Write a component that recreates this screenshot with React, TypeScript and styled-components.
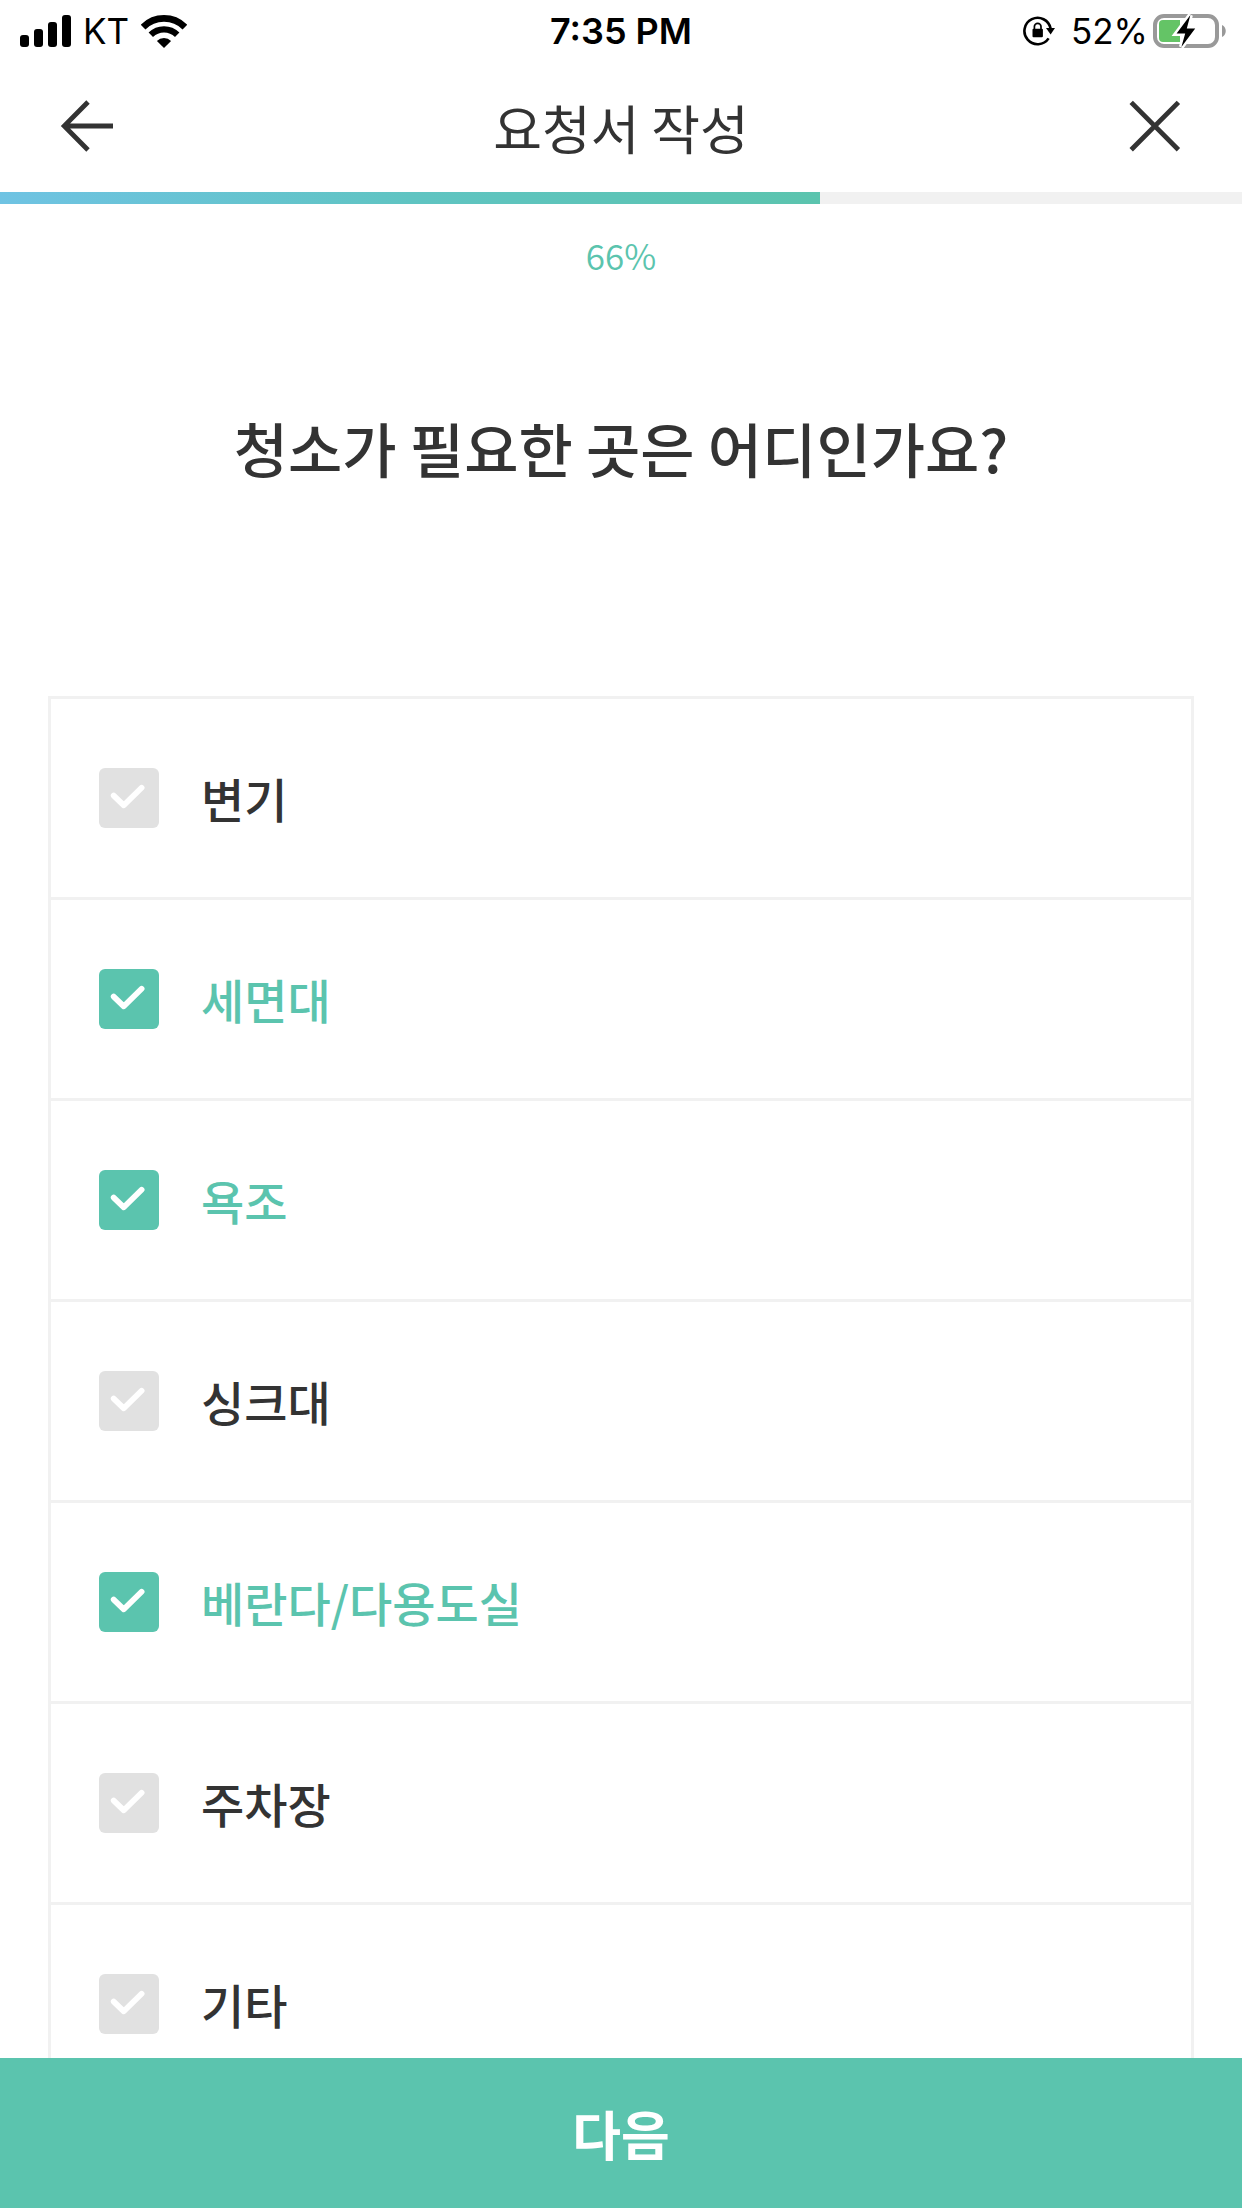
import React, { useState } from "react";
import styled, { createGlobalStyle } from "styled-components";

const teal = "#5bc4ae";
const ink = "#333333";
const line = "#f1f1f1";

const GlobalStyle = createGlobalStyle`
  *, *::before, *::after { box-sizing: border-box; }
  body {
    margin: 0;
    background: #ffffff;
    color: ${ink};
    font-family: "Noto Sans CJK KR", sans-serif;
  }
`;

const Screen = styled.div`
  display: flex;
  flex-direction: column;
  height: 100vh;
  overflow: hidden;
`;

const StatusBar = styled.div`
  display: grid;
  grid-template-columns: 1fr auto 1fr;
  align-items: center;
  flex: none;
  height: 62px;
  padding: 0 16px;
  color: #000000;
  font-family: Inter, "Liberation Sans", sans-serif;
  font-size: 35px;
  line-height: 44px;
`;

const StatusGroup = styled.div<{ $end?: boolean }>`
  display: flex;
  align-items: center;
  justify-content: ${(p) => (p.$end ? "flex-end" : "flex-start")};
  gap: ${(p) => (p.$end ? "16px" : "12px")};
  padding-left: 4px;

  svg { display: block; flex: none; }
`;

const Clock = styled.time`
  font-size: 36px;
  font-weight: 600;
`;

const Battery = styled.span`
  display: flex;
  align-items: center;
  gap: 5px;
`;

const Header = styled.header`
  display: grid;
  grid-template-columns: 1fr auto 1fr;
  align-items: center;
  flex: none;
  height: 130px;
  padding: 0 48px;
`;

const Title = styled.h1`
  margin: 0;
  font-size: 53px;
  font-weight: 400;
  line-height: 76px;
`;

const IconButton = styled.button<{ $end?: boolean }>`
  display: flex;
  justify-self: ${(p) => (p.$end ? "end" : "start")};
  padding: 12px;
  border: 0;
  background: none;
  color: ${ink};
  cursor: pointer;
`;

const Progress = styled.div`
  flex: none;
  height: 12px;
  background: ${line};
`;

const ProgressFill = styled.div`
  height: 100%;
  background: linear-gradient(90deg, #6fc3e3, #5fc4c2 50%, ${teal});
`;

const Content = styled.main`
  flex: 1;
  min-height: 0;
  overflow-y: auto;
  scrollbar-width: none;
  text-align: center;
`;

const Percent = styled.p`
  margin: 0;
  padding-top: 25px;
  color: ${teal};
  font-size: 35px;
  font-weight: 350;
  line-height: 52px;
`;

const Form = styled.fieldset`
  min-width: 0;
  margin: 0;
  padding: 0 48px 48px;
  border: 0;
`;

const Question = styled.legend`
  width: 100%;
  padding: 120px 0 201px;
  font-size: 59px;
  font-weight: 500;
  line-height: 94px;
`;

const Options = styled.ul`
  margin: 0;
  padding: 0;
  border: 3px solid ${line};
  list-style: none;
`;

const OptionItem = styled.li`
  & + & { border-top: 3px solid ${line}; }
`;

const OptionLabel = styled.label<{ $on: boolean }>`
  display: flex;
  align-items: center;
  gap: 42px;
  height: 198px;
  padding: 0 48px;
  color: ${(p) => (p.$on ? teal : ink)};
  font-size: 47px;
  font-weight: 500;
  line-height: 68px;
  cursor: pointer;
`;

const Tick = styled.span`
  display: grid;
  flex: none;

  > * { grid-area: 1 / 1; }
  svg { pointer-events: none; }
`;

const TickInput = styled.input`
  appearance: none;
  width: 60px;
  height: 60px;
  margin: 0;
  border-radius: 6px;
  background: #e1e1e1;
  cursor: pointer;

  &:checked { background: ${teal}; }
`;

const NextButton = styled.button`
  flex: none;
  height: 150px;
  border: 0;
  background: ${teal};
  color: #ffffff;
  font-family: inherit;
  font-size: 53px;
  font-weight: 700;
  line-height: 76px;
  cursor: pointer;
`;

const SignalIcon = () => (
  <svg width="51" height="32" viewBox="0 0 51 32" aria-hidden="true">
    <rect x="0" y="20" width="9" height="12" rx="3" />
    <rect x="14" y="14" width="9" height="18" rx="3" />
    <rect x="28" y="7" width="9" height="25" rx="3" />
    <rect x="42" y="0" width="9" height="32" rx="3" />
  </svg>
);

const WifiIcon = () => (
  <svg width="46" height="33" viewBox="0 0 46 33" aria-hidden="true">
    <path d="M2.1 12.1A29.5 29.5 0 0 1 43.9 12.1" fill="none" stroke="#000" strokeWidth="6.6" />
    <path d="M9.8 19.8A18.6 18.6 0 0 1 36.2 19.8" fill="none" stroke="#000" strokeWidth="6.2" />
    <path d="M23 33L15.9 25.9A10 10 0 0 1 30.1 25.9Z" />
  </svg>
);

const RotationLockIcon = () => (
  <svg width="32" height="30" viewBox="0 0 32 30" aria-hidden="true">
    <path d="M27.6 12.6A13.2 13.2 0 1 0 25.6 22.4" fill="none" stroke="#000" strokeWidth="2.6" />
    <path d="M23 12H32L27.6 18.6Z" />
    <rect x="9.5" y="12.8" width="10.4" height="8.4" rx="1" />
    <path d="M11.4 13.5V10.6a3.3 3.3 0 0 1 6.6 0V13.5" fill="none" stroke="#000" strokeWidth="1.7" />
  </svg>
);

const BatteryIcon = () => (
  <svg width="73" height="34" viewBox="0 0 73 34" aria-hidden="true">
    <rect x="2" y="2" width="62" height="30" rx="9" fill="none" stroke="#999" strokeWidth="4" />
    <path d="M10 6H27V28H10a4 4 0 0 1-4-4V10a4 4 0 0 1 4-4Z" fill="#64c466" />
    <path d="M69 11c5 2 5 10 0 12Z" fill="#999" />
    <path
      d="M37.4 1L23.6 19.4H32.2L28.4 33L42.2 14.4H33.8Z"
      stroke="#fff"
      strokeWidth="5"
      paintOrder="stroke"
    />
  </svg>
);

const BackIcon = () => (
  <svg width="53" height="54" viewBox="0 0 53 54" fill="none" stroke="currentColor" strokeWidth="4.8" aria-hidden="true">
    <path d="M28 2L4.2 26L28 50M4 26H53" />
  </svg>
);

const CloseIcon = () => (
  <svg width="54" height="54" viewBox="0 0 54 54" fill="none" stroke="currentColor" strokeWidth="4.8" aria-hidden="true">
    <path d="M3.2 2.4L50.4 49.8M50.4 2.4L3.2 49.8" />
  </svg>
);

const CheckIcon = () => (
  <svg width="60" height="60" viewBox="0 0 60 60" fill="none" stroke="#fff" strokeWidth="5.8" strokeLinecap="round" strokeLinejoin="round" aria-hidden="true">
    <path d="M14.7 27.6L24.8 37.3L42.6 19.8" />
  </svg>
);

const places = ["변기", "세면대", "욕조", "싱크대", "베란다/다용도실", "주차장", "기타"];
const progress = 66;

export default function App() {
  const [selected, setSelected] = useState<string[]>(["세면대", "욕조", "베란다/다용도실"]);

  const toggle = (place: string) =>
    setSelected((now) => (now.includes(place) ? now.filter((p) => p !== place) : [...now, place]));

  return (
    <Screen>
      <GlobalStyle />
      <StatusBar>
        <StatusGroup>
          <SignalIcon />
          <span>KT</span>
          <WifiIcon />
        </StatusGroup>
        <Clock>7:35 PM</Clock>
        <StatusGroup $end>
          <RotationLockIcon />
          <Battery>
            <span>52%</span>
            <BatteryIcon />
          </Battery>
        </StatusGroup>
      </StatusBar>
      <Header>
        <IconButton type="button" aria-label="뒤로">
          <BackIcon />
        </IconButton>
        <Title>요청서 작성</Title>
        <IconButton type="button" aria-label="닫기" $end>
          <CloseIcon />
        </IconButton>
      </Header>
      <Progress role="progressbar" aria-label="작성 진행률" aria-valuenow={progress} aria-valuemin={0} aria-valuemax={100}>
        <ProgressFill style={{ width: `${progress}%` }} />
      </Progress>
      <Content>
        <Percent>{progress}%</Percent>
        <Form>
          <Question>청소가 필요한 곳은 어디인가요?</Question>
          <Options>
            {places.map((place, i) => {
              const on = selected.includes(place);
              return (
                <OptionItem key={place}>
                  <OptionLabel $on={on} htmlFor={`place-${i}`}>
                    <Tick>
                      <TickInput id={`place-${i}`} type="checkbox" checked={on} onChange={() => toggle(place)} />
                      <CheckIcon />
                    </Tick>
                    {place}
                  </OptionLabel>
                </OptionItem>
              );
            })}
          </Options>
        </Form>
      </Content>
      <NextButton type="button">다음</NextButton>
    </Screen>
  );
}
